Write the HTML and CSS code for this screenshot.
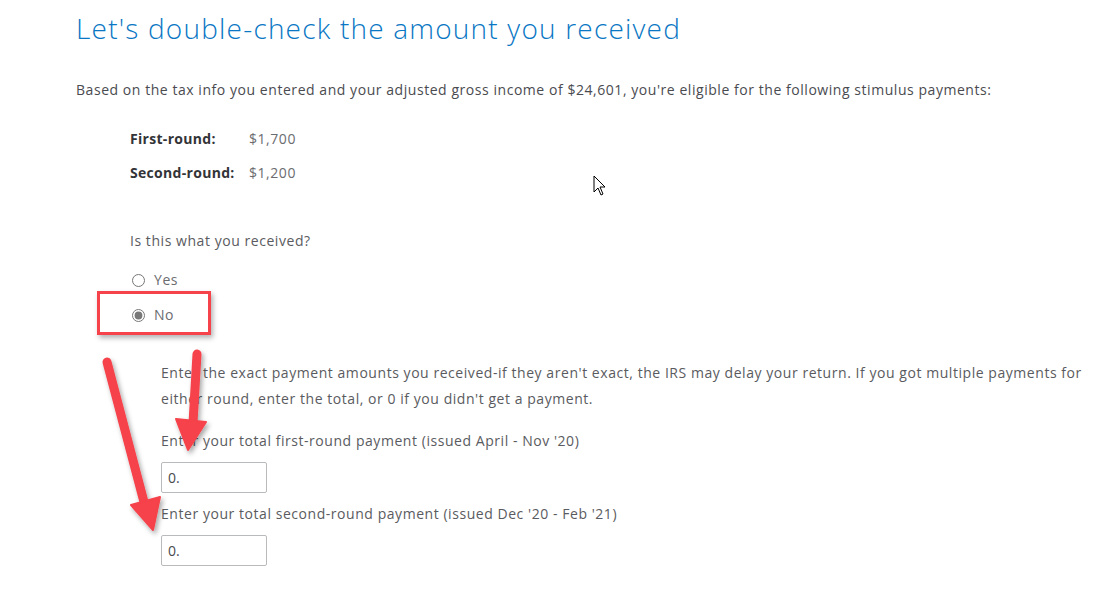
FILE: index.html
```html
<!DOCTYPE html>
<html lang="en">
<head>
    <meta charset="UTF-8">
    <meta name="viewport" content="width=device-width, initial-scale=1.0">
    <title>Stimulus check</title>
    <link rel="stylesheet" href="styles.css">
</head>
<body>
    <div class="page">
        <h1 class="title">Let's double-check the amount you received</h1>

        <p class="intro">Based on the tax info you entered and your adjusted gross income of $24,601, you're eligible for the following stimulus payments:</p>

        <dl class="rounds">
            <div class="round">
                <dt>First-round:</dt>
                <dd>$1,700</dd>
            </div>
            <div class="round">
                <dt>Second-round:</dt>
                <dd>$1,200</dd>
            </div>
        </dl>

        <fieldset class="question">
            <legend>Is this what you received?</legend>
            <label class="choice"><input type="radio" name="received"> Yes</label>
            <label class="choice choice-marked"><input type="radio" name="received" checked> No</label>
        </fieldset>

        <div class="amounts">
            <p>Enter the exact payment amounts you received-if they aren't exact, the IRS may delay your return. If you got multiple payments for either round, enter the total, or 0 if you didn't get a payment.</p>

            <label class="field-label" for="first">Enter your total first-round payment (issued April - Nov '20)</label>
            <input class="amount" type="text" id="first" value="0.">

            <label class="field-label" for="second">Enter your total second-round payment (issued Dec '20 - Feb '21)</label>
            <input class="amount" type="text" id="second" value="0.">
        </div>

        <!-- screenshot annotations -->
        <svg class="arrows" width="1095" height="590" viewBox="0 0 1095 590">
            <defs>
                <filter id="shade" x="-30%" y="-20%" width="160%" height="140%">
                    <feDropShadow dx="2" dy="3" stdDeviation="2.5" flood-color="#000" flood-opacity="0.35"/>
                </filter>
            </defs>
            <g filter="url(#shade)" fill="#f5424b" stroke="#f5424b" stroke-linecap="round" stroke-linejoin="round">
                <line x1="197" y1="354" x2="193" y2="423" stroke-width="9"/>
                <polygon points="176,419 206,422 188,450" stroke-width="2"/>
                <line x1="107" y1="362" x2="144" y2="502" stroke-width="9"/>
                <polygon points="131,505 160,497 153,530" stroke-width="2"/>
            </g>
            <path class="cursor" d="M594 176 L594 192 L598 188 L601 195 L603 194 L600 187 L605 187 Z"/>
        </svg>
    </div>
</body>
</html>
```

FILE: styles.css
```css
body {
    margin: 0;
    font-family: "Open Sans", Lato, sans-serif;
    color: #4a4b50;
    background: #fff;
    letter-spacing: 0.55px;
}

.page {
    position: relative;
    padding: 10px 0 0 76px;
    height: 590px;
    box-sizing: border-box;
    overflow: hidden;
}

.title {
    margin: 0;
    font-size: 28px;
    font-weight: 300;
    color: #0a77c4;
    line-height: 36px;
    letter-spacing: 1.2px;
}

.intro {
    margin: 32px 0 0;
    font-size: 14px;
    line-height: 24px;
    font-weight: 400;
}

.rounds {
    margin: 25px 0 0 54px;
}

.round {
    display: flex;
    font-size: 14px;
    line-height: 24px;
    margin-bottom: 10px;
}

.round dt {
    width: 119px;
    font-weight: 700;
    color: #333438;
    letter-spacing: 0.3px;
}

.round dd {
    margin: 0;
    color: #6b6c70;
}

.question {
    margin: 44px 0 0 54px;
    padding: 0;
    border: none;
}

.question legend {
    padding: 0;
    font-size: 14px;
    line-height: 24px;
    color: #5a5b60;
}

.choice {
    display: flex;
    align-items: center;
    gap: 9px;
    font-size: 14px;
    line-height: 24px;
    color: #6b6c70;
    margin-top: 15px;
}

.choice + .choice {
    margin-top: 11px;
}

.choice input {
    margin: 0 0 0 2px;
    width: 13px;
    height: 13px;
    accent-color: #777;
}

.choice-marked {
    position: relative;
}

.choice-marked::before {
    content: "";
    position: absolute;
    left: -33px;
    top: -12px;
    width: 108px;
    height: 38px;
    border: 3px solid #f5424b;
    box-shadow: 2px 3px 5px rgba(0, 0, 0, 0.3);
}

.amounts {
    margin: 33px 0 0 85px;
    font-size: 14px;
    color: #5a5b60;
}

.amounts p {
    margin: 0;
    line-height: 26px;
    max-width: 930px;
}

.field-label {
    display: block;
    line-height: 24px;
    margin-top: 17px;
}

.amount {
    display: block;
    margin-top: 9px;
    width: 106px;
    height: 31px;
    box-sizing: border-box;
    border: 1px solid #b9babc;
    border-radius: 2px;
    padding: 0 6px;
    font-family: inherit;
    font-size: 14px;
    color: #4a4b50;
}

.amount + .field-label {
    margin-top: 9px;
}

.arrows {
    position: absolute;
    left: 0;
    top: 0;
    pointer-events: none;
}

.cursor {
    fill: #fff;
    stroke: #000;
    stroke-width: 1;
}
```
